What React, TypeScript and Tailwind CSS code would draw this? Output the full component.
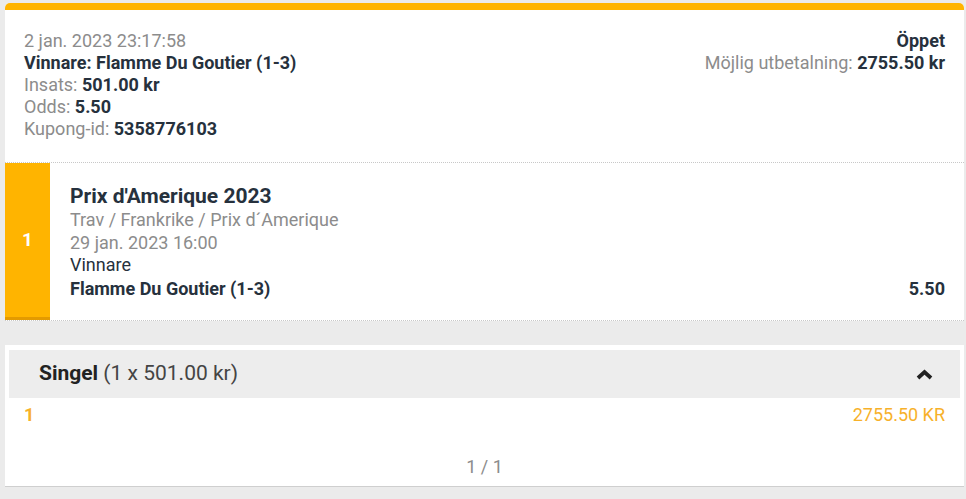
import React from 'react';

const dark = 'text-[#26313d]';
const muted = 'text-[#8c8c8c]';

const Line = ({ label, value }: { label: string; value: string }) => (
  <div>
    <span className={muted}>{label} </span>
    <span className={`font-bold ${dark}`}>{value}</span>
  </div>
);

const App: React.FC = () => {
  return (
    <div className="min-h-[499px] bg-[#ebebeb] pt-[3px] pl-[5px] pr-[2px] font-['Roboto',sans-serif]">
      {/* Bet card */}
      <div className="bg-white rounded-t-[5px] overflow-hidden">
        <div className="h-[7px] bg-[#ffb400]" />

        <div className="flex justify-between px-[19px] pt-[20px] pb-[22px] text-[18px] leading-[22px]">
          <div>
            <div className={muted}>2 jan. 2023 23:17:58</div>
            <div className={`font-bold ${dark}`}>Vinnare: Flamme Du Goutier (1-3)</div>
            <Line label="Insats:" value="501.00 kr" />
            <Line label="Odds:" value="5.50" />
            <Line label="Kupong-id:" value="5358776103" />
          </div>
          <div className="text-right">
            <div className={`font-bold ${dark}`}>Öppet</div>
            <Line label="Möjlig utbetalning:" value="2755.50 kr" />
          </div>
        </div>

        {/* Leg */}
        <div className="flex border-t border-b border-dotted border-[#c8c8c8]">
          <div className="w-[45px] shrink-0 bg-[#ffb400] border-b-[3px] border-[#e39a00] flex items-center justify-center text-white font-bold text-[19px]">
            1
          </div>
          <div className="flex-1 pl-[20px] pr-[19px] pt-[20px] pb-[20px] text-[18px] leading-[22px]">
            <div className={`font-bold text-[21px] leading-[26px] ${dark}`}>Prix d'Amerique 2023</div>
            <div className={muted}>Trav / Frankrike / Prix d´Amerique</div>
            <div className={`${muted} mt-[1px]`}>29 jan. 2023 16:00</div>
            <div className={dark}>Vinnare</div>
            <div className="flex justify-between mt-[2px]">
              <span className={`font-bold ${dark}`}>Flamme Du Goutier (1-3)</span>
              <span className={`font-bold ${dark}`}>5.50</span>
            </div>
          </div>
        </div>
      </div>

      {/* System card */}
      <div className="mt-[24px] bg-white border-b border-[#cfcfcf] pt-[5px] pb-[8px]">
        <div className="mx-[4px] h-[48px] bg-[#ededed] flex items-center justify-between pl-[30px] pr-[27px]">
          <div className="text-[21px]">
            <span className="font-bold text-[#222]">Singel</span>
            <span className="text-[#444]"> (1 x 501.00 kr)</span>
          </div>
          <svg width="17" height="11" viewBox="0 0 17 11">
            <polyline points="2,9 8.5,3 15,9" fill="none" stroke="#222" strokeWidth="3.8" strokeLinejoin="miter" />
          </svg>
        </div>
        <div className="flex justify-between px-[19px] pt-[6px] text-[18px] leading-[22px] text-[#f7b12a]">
          <span className="font-bold">1</span>
          <span>2755.50 KR</span>
        </div>
        <div className={`text-center mt-[30px] text-[18px] leading-[22px] ${muted}`}>1 / 1</div>
      </div>
    </div>
  );
};

export default App;
